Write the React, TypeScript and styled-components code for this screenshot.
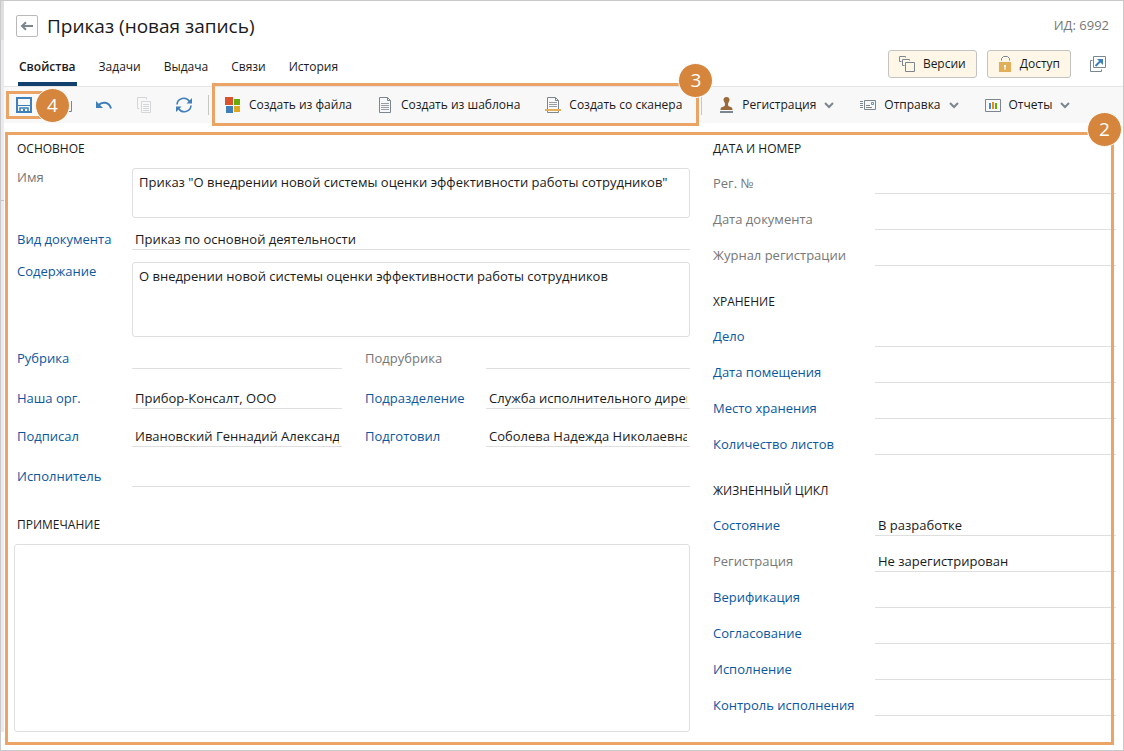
import React, { useId } from 'react';
import styled, { createGlobalStyle } from 'styled-components';

const colors = {
  text: '#1a1a1a',
  muted: '#777777',
  link: '#0b57a0',
  line: '#dfdfe0',
  accent: '#eaa465',
  badge: '#d6853d',
  icon: '#7c868f',
  blue: '#3f7fba',
};

const GlobalStyle = createGlobalStyle`
  *, *::before, *::after { box-sizing: border-box; }
  body {
    margin: 0;
    background: #fff;
    color: ${colors.text};
    font: 13px/20px "Open Sans", "Noto Sans", sans-serif;
  }
  button, input, textarea { font: inherit; color: inherit; margin: 0; }
`;

const Page = styled.div`
  display: flex;
  min-height: 100vh;
  border: 1px solid #c9c9c9;
`;

const SideStrip = styled.div`
  display: flex;
  flex-direction: column;
  width: 3px;
  margin-bottom: 18px;
  background: #ebeaee;
  &::before {
    content: '';
    height: 39px;
    background: #dfdfe1;
  }
  &::after {
    content: '';
    height: 1px;
    margin-top: 160px;
    background: #c4c4c6;
  }
`;

const Card = styled.main`
  flex: 1;
  min-width: 0;
`;

const Header = styled.header`
  display: flex;
  justify-content: space-between;
  height: 86px;
  border-bottom: 1px solid #e4e4e4;
`;

const HeaderLeft = styled.div`
  display: flex;
  flex-direction: column;
  justify-content: space-between;
  padding: 10px 0 0 12px;
`;

const TitleRow = styled.div`
  display: flex;
  align-items: center;
  gap: 9px;
`;

const Title = styled.h1`
  margin: 0;
  font-size: 19px;
  line-height: 30px;
  font-weight: 400;
`;

const BackButton = styled.button`
  display: grid;
  place-items: center;
  width: 22px;
  height: 22px;
  padding: 0;
  border: 1px solid #b9b9b9;
  border-radius: 2px;
  background: #fff;
`;

const Tabs = styled.nav`
  display: flex;
  gap: 21px;
  padding-left: 2px;
`;

const Tab = styled.a<{ $active?: boolean }>`
  padding: 0 1px 5px;
  border-bottom: 4px solid ${p => (p.$active ? '#123f6d' : 'transparent')};
  color: inherit;
  font-size: 12px;
  font-weight: ${p => (p.$active ? 600 : 400)};
  text-decoration: none;
`;

const HeaderRight = styled.div`
  display: flex;
  flex-direction: column;
  align-items: flex-end;
  justify-content: space-between;
  padding: 14px 14px 8px 0;
`;

const RecordId = styled.div`
  color: ${colors.muted};
`;

const Actions = styled.div`
  display: flex;
  align-items: center;
  gap: 10px;
  padding-right: 3px;
`;

const ActionButton = styled.button`
  display: flex;
  align-items: center;
  gap: 8px;
  height: 28px;
  padding: 0 10px;
  border: 1px solid #c3c3c3;
  border-radius: 3px;
  background: #fef7e7;
  font-size: 12px;
`;

const IconButton = styled.button`
  display: flex;
  position: relative;
  padding: 0;
  border: 0;
  background: none;
`;

const OpenButton = styled(IconButton)`
  margin-left: 9px;
`;

const Toolbar = styled.div`
  display: flex;
  align-items: center;
  gap: 24px;
  height: 36px;
  padding-left: 12px;
  background: #f8f8f8;
`;

const Divider = styled.span`
  width: 1px;
  height: 20px;
  margin: 0 -8px;
  background: #c6c6c6;
`;

const ToolGroup = styled.div`
  display: flex;
  align-self: stretch;
  align-items: center;
  gap: 25px;
  position: relative;
  padding-right: 3px;
`;

const MenuGroup = styled.div`
  display: flex;
  align-items: center;
  gap: 26px;
`;

const ToolButton = styled.button`
  display: flex;
  align-items: center;
  gap: 8px;
  padding: 0;
  border: 0;
  background: none;
  font-size: 12px;
  white-space: nowrap;
`;

const Outline = styled.span<{ $inset: string }>`
  position: absolute;
  inset: ${p => p.$inset};
  border: 3px solid ${colors.accent};
  pointer-events: none;
`;

const Badge = styled.span<{ $top: number; $right: number }>`
  position: absolute;
  z-index: 1;
  top: ${p => p.$top}px;
  right: ${p => p.$right}px;
  width: 35px;
  height: 35px;
  border: 1px solid #fff;
  border-radius: 50%;
  background: ${colors.badge};
  color: #fff;
  font-size: 19px;
  line-height: 33px;
  text-align: center;
`;

const Form = styled.form`
  display: grid;
  grid-template-columns: minmax(0, 676fr) minmax(0, 403fr);
  column-gap: 23px;
  position: relative;
  margin: 9px 7px 5px 1px;
  padding: 7px 0 13px 9px;
`;

const SectionTitle = styled.h2<{ $gap?: number }>`
  margin: ${p => p.$gap ?? 0}px 0 0;
  font-size: 12px;
  line-height: 20px;
  font-weight: 400;
  text-transform: uppercase;
`;

const MainColumn = styled.section`
  & > ${SectionTitle} { padding-left: 3px; }
`;

const SideColumn = styled.section`
  & > ${SectionTitle} + div { margin-top: 14px; }
`;

const FormRow = styled.div<{ $gap: number; $split?: boolean; $side?: boolean }>`
  display: grid;
  grid-template-columns: ${p =>
    p.$side
      ? '162px minmax(0, 1fr)'
      : p.$split
        ? '115px minmax(0, 210fr) 144px minmax(0, 204fr)'
        : '115px minmax(0, 1fr)'};
  margin-top: ${p => p.$gap}px;
  padding-left: ${p => (p.$side ? 0 : 3)}px;
`;

const Label = styled.label<{ $muted?: boolean; $second?: boolean; $tight?: boolean }>`
  padding-left: ${p => (p.$second ? 23 : 0)}px;
  color: ${p => (p.$muted ? colors.muted : colors.link)};
  line-height: ${p => (p.$tight ? 18 : 20)}px;
  white-space: nowrap;
`;

const TextInput = styled.input`
  width: 100%;
  height: 21px;
  padding: 0 3px;
  border: 0;
  border-bottom: 1px solid ${colors.line};
  background: none;
  outline: none;
`;

const TextBox = styled.textarea<{ $height: number }>`
  display: block;
  width: 100%;
  height: ${p => p.$height}px;
  padding: 3px 6px;
  border: 1px solid ${colors.line};
  border-radius: 3px;
  outline: none;
  resize: none;
  background: #fff;
`;

const NoteBox = styled(TextBox)`
  margin-top: 9px;
`;

const Svg = ({ w = 16, h = 16, children }: { w?: number; h?: number; children: React.ReactNode }) => (
  <svg width={w} height={h} viewBox={`0 0 ${w} ${h}`} fill="none" aria-hidden="true">
    {children}
  </svg>
);

const BackIcon = () => (
  <Svg w={14} h={10}>
    <path d="M13 5H2.500M6 1.200 2 5l4 3.800" stroke={colors.icon} strokeWidth="2" />
  </Svg>
);

const SaveIcon = () => (
  <Svg>
    <path d="M1 1h14v14H1z" stroke={colors.blue} strokeWidth="2" />
    <path d="M1 8.500h14" stroke={colors.blue} />
    <path d="M4 15v-4h8v4" stroke={colors.blue} strokeWidth="1.500" />
    <path d="M7 12h2v3H7z" fill={colors.blue} />
  </Svg>
);

const SaveCloseIcon = () => (
  <Svg>
    <path d="M12 14.500h3.500V4" stroke={colors.icon} />
  </Svg>
);

const UndoIcon = () => (
  <Svg>
    <path d="M2.500 8C6 4.500 13 4.500 15 11.500" stroke={colors.blue} strokeWidth="2" />
    <path d="M0 4v7h7z" fill={colors.blue} />
  </Svg>
);

const CopyIcon = () => (
  <Svg>
    <path d="M3.500 11.500h-2V.5h9v2" stroke="#d4d7da" />
    <path d="M5.500 4.500h9v11h-9zM7 7.500h6M7 9.500h6M7 11.500h6M7 13.500h6" stroke="#d4d7da" />
  </Svg>
);

const RefreshIcon = () => (
  <Svg>
    <path d="M1 7.500C1.500 1 10 -1 13.500 4.500M15 8.500C14.500 15 6 17 2.500 11.500" stroke={colors.blue} strokeWidth="1.600" />
    <path d="M16 1v5.500h-5.500zM0 15V9.500h5.500z" fill={colors.blue} />
  </Svg>
);

const OfficeIcon = () => (
  <Svg>
    <path d="M0 0h8v8H0z" fill="#d9532f" />
    <path d="M9 2h6v6H9z" fill="#69ac0a" />
    <path d="M1 9h7v7H1z" fill="#3f7fba" />
    <path d="M9 9h6v6H9z" fill="#e0a81c" />
  </Svg>
);

const TemplateIcon = () => (
  <Svg>
    <path d="M2.500.5h8l3 3v12h-11zM10.500.5v3h3" stroke={colors.icon} />
    <path d="M4 6.500h8M4 8.500h8M4 10.500h8M4 12.500h8" stroke={colors.icon} strokeWidth=".8" />
  </Svg>
);

const ScannerIcon = () => (
  <Svg>
    <path d="M2.500 12V.5h8l3 3V12M2.500 13v2.500h11V13M10.500.5v3h3" stroke={colors.icon} />
    <path d="M4 5.500h8M4 7.500h8M4 9.500h8" stroke={colors.icon} strokeWidth=".8" />
    <path d="M0 12h16v2H0z" fill="#e2ae57" />
  </Svg>
);

const StampIcon = () => (
  <Svg>
    <path d="M8.500 0c2 0 3 1.200 3 2.800C11.500 4.500 10 5.500 10 7c0 2 .5 2.500 2.500 3 1.500.4 2 1 2 3h-12c0-2 .5-2.600 2-3C6.500 9.500 7 9 7 7c0-1.500-1.500-2.500-1.500-4.200C5.500 1.200 6.500 0 8.500 0z" fill="#9a6a3a" />
    <path d="M2 14h13v2H2z" fill={colors.icon} />
  </Svg>
);

const MailIcon = () => (
  <Svg>
    <path d="M4.500 3.500h11v9h-11z" stroke={colors.icon} />
    <path d="M0 4.500h3M0 6.500h3M0 8.500h3M0 10.500h3M6 8.500h4M6 10.500h6" stroke={colors.icon} />
    <path d="M11.500 5.500h2v2h-2z" stroke="#4f9bd0" />
  </Svg>
);

const ReportIcon = () => (
  <Svg>
    <path d="M.5 2.500h15v12H.5z" stroke={colors.icon} />
    <path d="M4 6h2v6H4z" fill="#3f8fd0" />
    <path d="M7 5h2v7H7z" fill="#f08a0c" />
    <path d="M10 6h2v6h-2z" fill="#69ac0a" />
  </Svg>
);

const ChevronIcon = () => (
  <Svg w={10} h={8}>
    <path d="m1 2 4 4 4-4" stroke={colors.icon} strokeWidth="2" />
  </Svg>
);

const VersionsIcon = () => (
  <Svg>
    <path d="M2.500 5.500h-2v-5h6v1M5.500 9.500h-2v-6h7v1" stroke={colors.icon} />
    <path d="M6.500 6.500h9v9h-9z" stroke={colors.icon} />
  </Svg>
);

const LockIcon = () => (
  <Svg w={14}>
    <path d="M3.500 4.500v-2l2-2h4l2 2v2" stroke={colors.icon} />
    <path d="M1 6h12v10H1z" fill="#e2ae57" />
    <path d="M6 9h2v2l-.5.500V14h-1v-2.500L6 11z" fill="#fff" />
  </Svg>
);

const OpenIcon = () => (
  <Svg>
    <path d="M3.500.500h12v11h-12z" stroke={colors.icon} />
    <path d="M2.500 4.500h-2v11h11v-2" stroke={colors.icon} />
    <path d="M5.500 10 11 4.500" stroke={colors.blue} strokeWidth="2" />
    <path d="M7 3h6v6z" fill={colors.blue} />
  </Svg>
);

type FieldProps = { label: string; value?: string; muted?: boolean; second?: boolean };

const Field = ({ label, value, muted, second }: FieldProps) => {
  const id = useId();
  return (
    <>
      <Label htmlFor={id} $muted={muted} $second={second}>{label}</Label>
      <TextInput id={id} defaultValue={value} />
    </>
  );
};

const AreaField = ({ label, value, muted, height }: FieldProps & { height: number }) => {
  const id = useId();
  return (
    <>
      <Label htmlFor={id} $muted={muted} $tight>{label}</Label>
      <TextBox id={id} defaultValue={value} $height={height} />
    </>
  );
};

const sideSections: { title: string; fields: FieldProps[] }[] = [
  {
    title: 'Дата и номер',
    fields: [
      { label: 'Рег. №', muted: true },
      { label: 'Дата документа', muted: true },
      { label: 'Журнал регистрации', muted: true },
    ],
  },
  {
    title: 'Хранение',
    fields: [
      { label: 'Дело' },
      { label: 'Дата помещения' },
      { label: 'Место хранения' },
      { label: 'Количество листов' },
    ],
  },
  {
    title: 'Жизненный цикл',
    fields: [
      { label: 'Состояние', value: 'В разработке' },
      { label: 'Регистрация', value: 'Не зарегистрирован', muted: true },
      { label: 'Верификация' },
      { label: 'Согласование' },
      { label: 'Исполнение' },
      { label: 'Контроль исполнения' },
    ],
  },
];

export default function App() {
  return (
    <>
      <GlobalStyle />
      <Page>
        <SideStrip />
        <Card>
          <Header>
            <HeaderLeft>
              <TitleRow>
                <BackButton type="button" aria-label="Назад"><BackIcon /></BackButton>
                <Title>Приказ (новая запись)</Title>
              </TitleRow>
              <Tabs>
                {['Свойства', 'Задачи', 'Выдача', 'Связи', 'История'].map((name, i) => (
                  <Tab key={name} href="#" $active={i === 0}>{name}</Tab>
                ))}
              </Tabs>
            </HeaderLeft>
            <HeaderRight>
              <RecordId>ИД: 6992</RecordId>
              <Actions>
                <ActionButton type="button"><VersionsIcon />Версии</ActionButton>
                <ActionButton type="button"><LockIcon />Доступ</ActionButton>
                <OpenButton type="button" aria-label="Открыть в новом окне"><OpenIcon /></OpenButton>
              </Actions>
            </HeaderRight>
          </Header>
          <Toolbar>
            <IconButton type="button" aria-label="Сохранить">
              <SaveIcon />
              <Outline $inset="-6px -24px -6px -10px" />
              <Badge $top={-9} $right={-38}>4</Badge>
            </IconButton>
            <IconButton type="button" aria-label="Сохранить и закрыть"><SaveCloseIcon /></IconButton>
            <IconButton type="button" aria-label="Отменить"><UndoIcon /></IconButton>
            <IconButton type="button" aria-label="Копировать" disabled><CopyIcon /></IconButton>
            <IconButton type="button" aria-label="Обновить"><RefreshIcon /></IconButton>
            <Divider />
            <ToolGroup>
              <ToolButton type="button"><OfficeIcon />Создать из файла</ToolButton>
              <ToolButton type="button"><TemplateIcon />Создать из шаблона</ToolButton>
              <ToolButton type="button"><ScannerIcon />Создать со сканера</ToolButton>
              <Outline $inset="-4px -14px -3px -13px" />
              <Badge $top={-24} $right={-28}>3</Badge>
            </ToolGroup>
            <Divider />
            <MenuGroup>
              <ToolButton type="button"><StampIcon />Регистрация<ChevronIcon /></ToolButton>
              <ToolButton type="button"><MailIcon />Отправка<ChevronIcon /></ToolButton>
              <ToolButton type="button"><ReportIcon />Отчеты<ChevronIcon /></ToolButton>
            </MenuGroup>
          </Toolbar>
          <Form>
            <MainColumn>
              <SectionTitle>Основное</SectionTitle>
              <FormRow $gap={9}>
                <AreaField label="Имя" muted height={50} value={'Приказ "О внедрении новой системы оценки эффективности работы сотрудников"'} />
              </FormRow>
              <FormRow $gap={11}>
                <Field label="Вид документа" value="Приказ по основной деятельности" />
              </FormRow>
              <FormRow $gap={12}>
                <AreaField label="Содержание" height={75} value="О внедрении новой системы оценки эффективности работы сотрудников" />
              </FormRow>
              <FormRow $gap={11} $split>
                <Field label="Рубрика" />
                <Field label="Подрубрика" muted second />
              </FormRow>
              <FormRow $gap={19} $split>
                <Field label="Наша орг." value="Прибор-Консалт, ООО" />
                <Field label="Подразделение" second value="Служба исполнительного директора" />
              </FormRow>
              <FormRow $gap={17} $split>
                <Field label="Подписал" value="Ивановский Геннадий Александрович" />
                <Field label="Подготовил" second value="Соболева Надежда Николаевна" />
              </FormRow>
              <FormRow $gap={19}>
                <Field label="Исполнитель" />
              </FormRow>
              <SectionTitle id="note-title" $gap={28}>Примечание</SectionTitle>
              <NoteBox aria-labelledby="note-title" $height={188} />
            </MainColumn>
            <SideColumn>
              {sideSections.map((section, i) => (
                <React.Fragment key={section.title}>
                  <SectionTitle $gap={i ? 26 : 0}>{section.title}</SectionTitle>
                  {section.fields.map(field => (
                    <FormRow key={field.label} $gap={15} $side>
                      <Field {...field} />
                    </FormRow>
                  ))}
                </React.Fragment>
              ))}
            </SideColumn>
            <Outline $inset="0 2px 0 0" />
            <Badge $top={-20} $right={-6}>2</Badge>
          </Form>
        </Card>
      </Page>
    </>
  );
}
